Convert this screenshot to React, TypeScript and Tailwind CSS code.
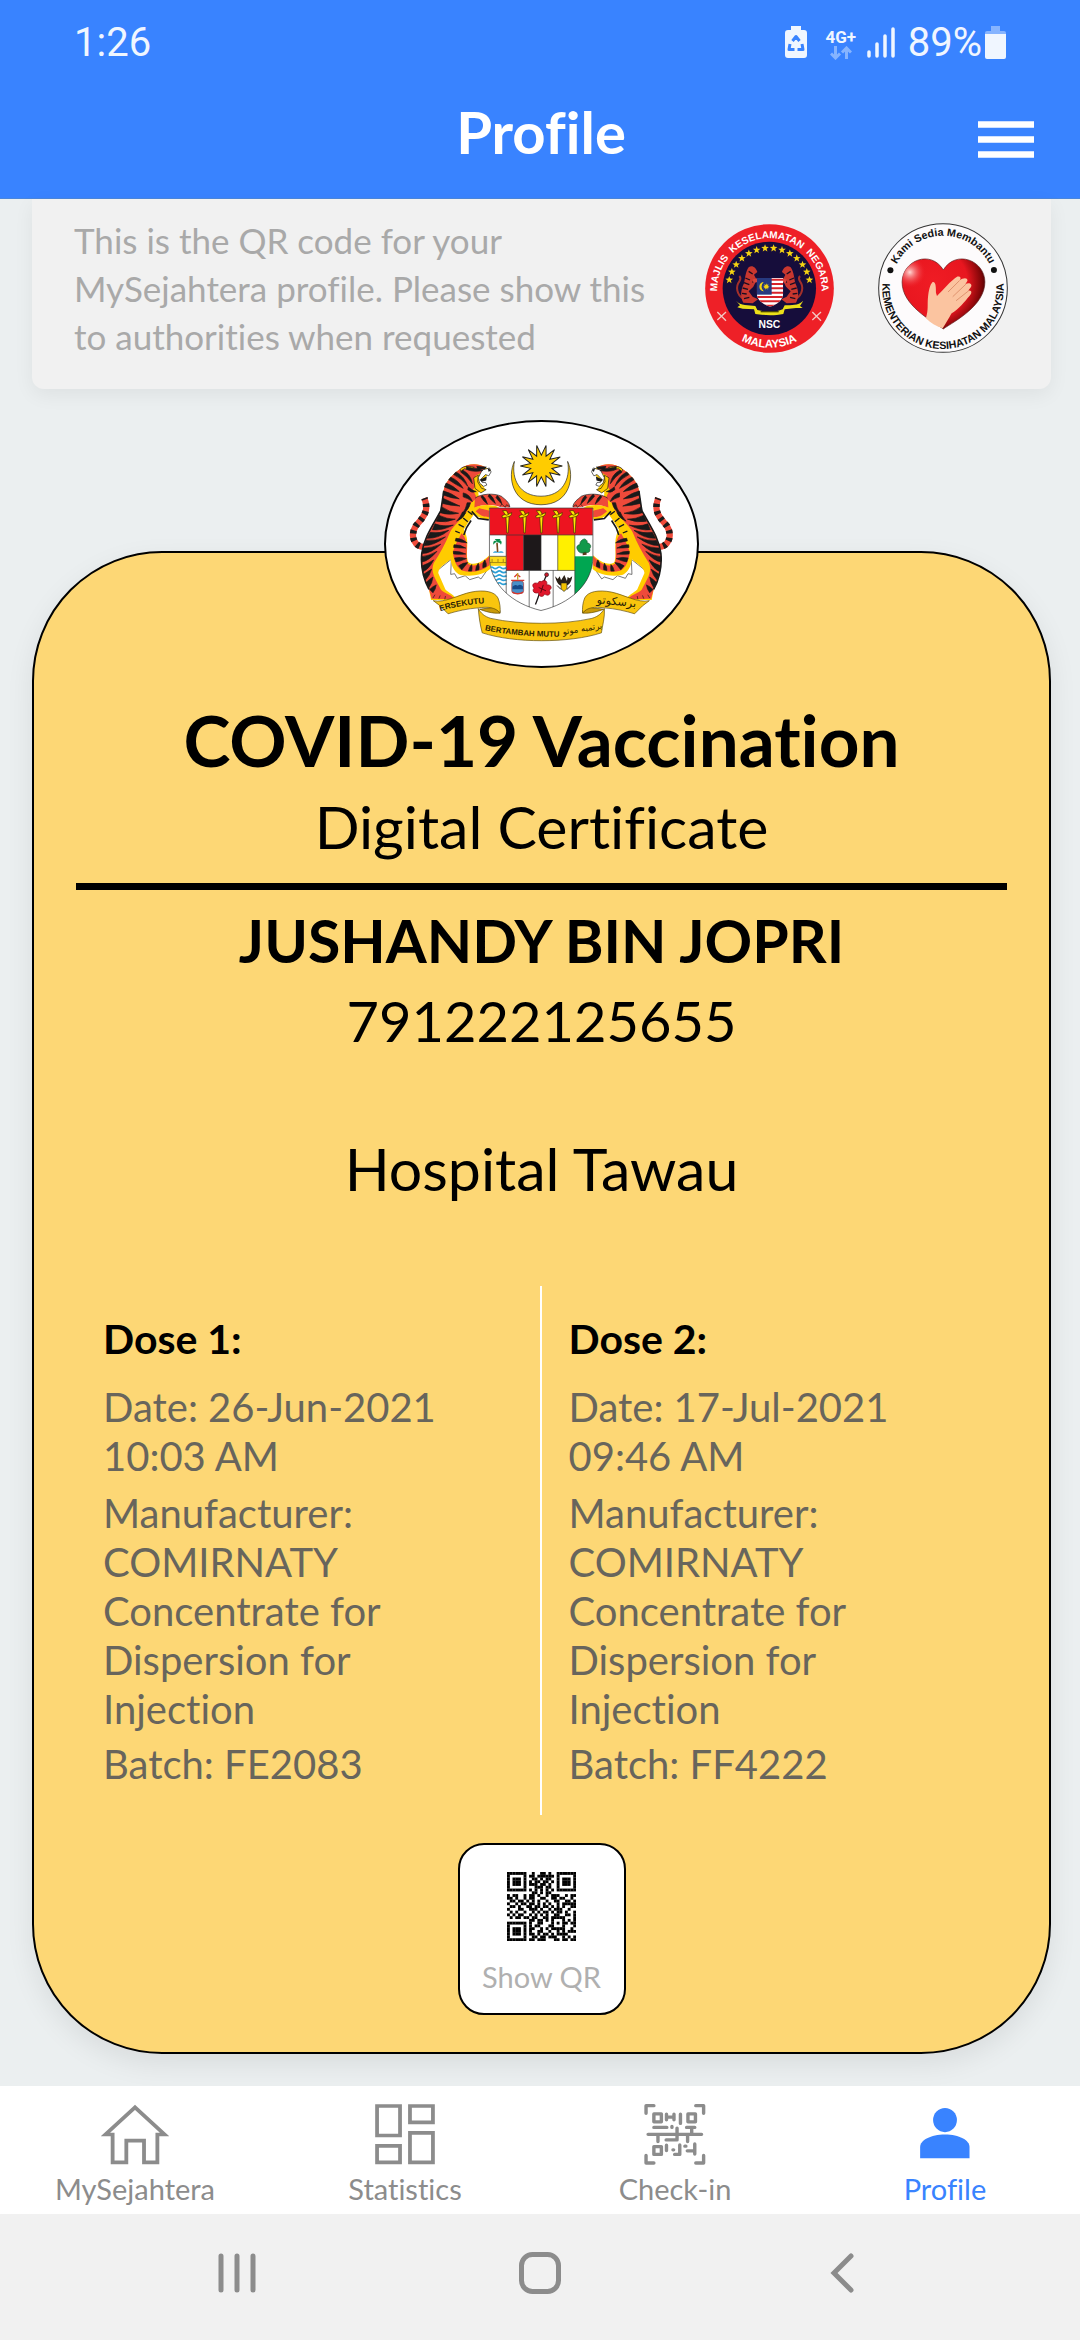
import React from "react";

const QR_ROWS = [
  "1111111001001101001111111",
  "1000001011011111101000001",
  "1011101001101011001011101",
  "1011101010110110101011101",
  "1011101011101101001011101",
  "1000001000111011001000001",
  "1111111010101010101111111",
  "0000000001101011000000000",
  "1011001011010010111001011",
  "1101001011001100110110010",
  "0110110101010010011001101",
  "1001011011010101001011111",
  "0110100110110110101010011",
  "1000110011101001011100100",
  "0101001001010110101101001",
  "1010110010101010011001101",
  "0101101101100110111110001",
  "0000000011011010100010101",
  "1111111010011000101011011",
  "1000001010110001100010001",
  "1011101011001010111110010",
  "1011101010011001001010111",
  "1011101011010110101111000",
  "1000001001101101110010101",
  "1111111011011100011011011",
];

const TIGER_STRIPES = [
  "M216 240 Q240 246 264 264 Q238 262 215 252 Z",
  "M214 262 Q240 274 266 286 Q236 284 213 278 Z",
  "M210 288 Q232 304 262 308 Q230 314 206 306 Z",
  "M202 314 Q226 326 252 326 Q222 338 194 332 Z",
  "M190 340 Q214 350 246 344 Q210 362 182 358 Z",
  "M176 366 Q204 370 232 360 Q200 386 166 384 Z",
  "M164 390 Q190 394 222 380 Q184 408 157 406 Z",
  "M155 414 Q180 414 208 402 Q176 432 151 430 Z",
  "M150 440 Q172 438 196 424 Q170 454 150 456 Z",
  "M151 468 Q168 462 186 450 Q172 478 153 486 Z",
  "M155 494 Q168 486 180 478 Q174 498 162 510 Z",
  "M164 518 Q174 508 184 502 Q182 520 172 534 Z",
  "M174 540 Q184 530 194 526 Q192 540 184 550 Z",
  "M224 216 Q246 224 264 242 Q240 238 219 228 Z",
  "M238 198 Q262 208 276 232 Q252 220 232 206 Z",
  "M254 182 Q280 196 290 226 Q272 202 247 190 Z",
  "M274 176 Q300 190 304 218 Q290 196 268 182 Z",
  "M286 166 Q306 172 326 172 L336 178 Q306 184 286 174 Z",
  "M276 246 Q296 250 304 272 Q290 262 276 258 Z",
  "M292 228 Q306 240 316 242 Q302 248 290 236 Z",
  "M298 276 Q294 298 272 312 Q286 292 288 276 Z",
  "M284 306 Q276 324 256 332 Q270 316 274 304 Z",
  "M334 254 Q344 260 350 280 Q338 272 330 258 Z",
  "M356 250 Q368 258 374 278 Q362 270 352 256 Z",
  "M380 254 Q390 262 394 280 Q384 272 376 260 Z",
  "M254 384 Q272 384 288 398 Q270 396 252 392 Z",
  "M248 404 Q266 402 284 414 Q266 414 247 412 Z",
  "M246 424 Q264 422 284 432 Q264 434 247 432 Z",
  "M250 444 Q268 440 286 446 Q268 454 254 456 Z",
  "M262 468 Q276 458 290 458 Q280 470 272 480 Z",
  "M292 484 Q294 472 302 464 Q304 476 302 484 Z",
  "M314 482 Q314 470 322 460 Q326 472 324 480 Z",
  "M336 474 Q334 460 342 450 Q348 462 346 470 Z",
];

function Tiger() {
  return (
    <g>
      <path d="M166 410 C128 416 112 378 132 346 C152 322 174 304 158 262" fill="none" stroke="#ef4a3a" strokeWidth="19" />
      <path d="M166 410 C128 416 112 378 132 346 C152 322 174 304 158 262" fill="none" stroke="#1a1a1a" strokeWidth="20" strokeDasharray="10 13" />
      <path d="M200 480 L240 448 L238 494 L250 492 L258 506 L282 498 L296 510 L322 502 L330 508 L354 474" fill="#fff" stroke="#333" strokeWidth="2" />
      <path d="M276 356 C300 390 280 430 292 458 C312 470 340 452 356 436 L358 478 C338 496 300 502 268 496 C238 484 232 440 240 400 Z" fill="#fc0" />
      <path d="M268 366 C300 394 280 432 290 462 C312 476 340 456 356 438 L356 466 C330 486 300 490 272 482 C250 470 240 430 246 396 Z" fill="#ef4a3a" />
      <path d="M268 172 C242 190 218 214 216 244 L208 300 C180 350 156 384 150 430 C146 470 156 510 172 540 L178 572 L256 572 C250 556 232 550 222 540 L200 490 C202 470 222 462 238 448 C250 400 270 370 290 338 L326 286 L322 244 L344 236 L330 214 L346 196 L360 178 L344 168 C320 154 290 156 268 172 Z" fill="#fc0" />
      <path d="M268 172 C242 190 218 214 216 244 L208 300 C180 350 156 384 150 430 C146 470 156 510 172 540 L180 568 L252 570 C236 552 216 552 208 540 C192 508 176 490 186 460 C206 430 222 400 236 366 C248 340 284 320 300 276 L318 262 L306 236 L318 214 L314 194 L340 180 L344 168 C320 154 290 156 268 172 Z" fill="#ef4a3a" />
      <path d="M320 284 C334 288 346 292 356 294 L356 326 C338 328 320 322 304 304 Z" fill="#fc0" />
      <path d="M326 292 C336 296 346 298 356 300 L356 320 C342 320 328 316 314 302 Z" fill="#ef4a3a" />
      <path d="M300 330 L286 352 L278 374 M302 302 L322 324 L354 328" fill="none" stroke="#1a1a1a" strokeWidth="5" />
      <path d="M276 322 L290 334 M262 342 L278 350 M252 362 L266 368 M290 302 L304 312" stroke="#1a1a1a" strokeWidth="4" />
      <path d="M312 262 C330 248 370 246 392 256 C404 266 416 274 418 290 L388 288 C366 280 336 282 310 290 Z" fill="#ef4a3a" />
      <path d="M312 262 C330 248 370 246 392 256 C404 266 416 274 418 288 L408 282 L404 290 L394 280 L388 288" fill="none" stroke="#1a1a1a" strokeWidth="2" />
      <path d="M310 292 C330 280 362 280 386 290 L356 296 L322 292 Z" fill="#fc0" />
      <path d="M266 176 C270 166 288 162 310 168 L294 176 L280 172 L270 180 Z" fill="#fc0" stroke="#1a1a1a" strokeWidth="2" />
      <path d="M308 200 L322 192 L320 212 L332 232 L346 236 L330 246 L312 232 Z" fill="#fc0" stroke="#1a1a1a" strokeWidth="2" />
      <path d="M334 176 L356 170 L361 182 L354 194 L344 190 L330 204 L334 214 L344 214 L348 222 L338 226 L326 216 L322 200 Z" fill="#fff" stroke="#1a1a1a" strokeWidth="2" />
      <path d="M326 206 L348 196 L346 208 L332 212 Z" fill="#1a1a1a" />
      <path d="M316 164 L348 166 L342 174 L320 174 Z M350 170 L360 176 L354 182 Z" fill="#1a1a1a" />
      {TIGER_STRIPES.map((d) => (
        <path key={d} d={d} fill="#1a1a1a" stroke="#1a1a1a" strokeWidth="2" strokeLinejoin="round" />
      ))}
      <path d="M217 240 L208 300 C180 350 156 384 150 430 C146 470 156 510 172 540" fill="none" stroke="#1a1a1a" strokeWidth="5" />
      <path d="M184 566 L190 556 M202 568 L206 558 M220 570 L222 560" stroke="#1a1a1a" strokeWidth="2" />
    </g>
  );
}

function starPoints(cx: number, cy: number, outer: number, inner: number, tips: number) {
  return Array.from({ length: tips * 2 }, (_, i) => {
    const r = i % 2 ? inner : outer;
    const a = (Math.PI * i) / tips - Math.PI / 2;
    return `${(cx + r * Math.cos(a)).toFixed(1)},${(cy + r * Math.sin(a)).toFixed(1)}`;
  }).join(" ");
}

function Crest() {
  return (
    <svg viewBox="42 30 945 743" className="h-full w-full" role="img" aria-label="Coat of arms of Malaysia">
      <defs>
        <clipPath id="shield">
          <path d="M356 292 H671 V440 C671 524 600 584 513 604 C426 584 356 524 356 440 Z" />
        </clipPath>
        <path id="motto" d="M342 664 Q450 686 590 684" />
        <path id="motto-left" d="M206 606 Q270 586 350 582" />
      </defs>
      <path d="M432 150 C410 196 424 282 513 282 C602 282 616 196 594 150 C604 204 578 256 513 256 C448 256 422 204 432 150 Z" fill="#fc0" stroke="#222" strokeWidth="2" />
      <polygon points={starPoints(514, 164, 64, 33, 14)} transform="rotate(13 514 164)" fill="#fc0" stroke="#222" strokeWidth="3" />
      <Tiger />
      <g transform="translate(1028 0) scale(-1 1)">
        <Tiger />
      </g>
      <g clipPath="url(#shield)">
        <rect x="356" y="292" width="315" height="320" fill="#fff" />
        <rect x="356" y="292" width="315" height="82" fill="#ed1420" />
        <rect x="407" y="374" width="53" height="108" fill="#ed1420" />
        <rect x="460" y="374" width="53" height="108" fill="#1d181a" />
        <rect x="564" y="374" width="52" height="108" fill="#fff000" />
        <rect x="356" y="439" width="51" height="29" fill="#ffd91a" />
        <path d="M356 458 H407 M364 458 V447 M382 458 V447 M398 458 V447" stroke="#a98a12" strokeWidth="3" />
        <path d="M356 474 q6 -5 12 0 t12 0 t12 0 t16 0 M356 486 q6 -5 12 0 t12 0 t12 0 t16 0 M356 498 q6 -5 12 0 t12 0 t12 0 t16 0 M356 510 q6 -5 12 0 t12 0 t12 0 t16 0 M356 522 q6 -5 12 0 t12 0 t12 0 t16 0" fill="none" stroke="#2c9fd6" strokeWidth="5" />
        <rect x="616" y="439" width="56" height="120" fill="#00a651" />
        <g fill="none" stroke="#333" strokeWidth="2">
          <path d="M356 374 H671 M407 374 V560 M460 374 V482 M513 374 V482 M564 374 V482 M616 374 V560 M407 482 H616 M477 482 V604 M550 482 V604 M356 439 H407" />
        </g>
        <path d="M366 428 q8 -8 16 -1 q10 -7 18 1 Z" fill="#2c9fd6" />
        <path d="M381 426 L379 398" stroke="#7a4a20" strokeWidth="5" />
        <path d="M380 396 C370 386 366 396 368 404 C374 394 378 396 380 396 C392 384 396 396 391 404 C388 396 382 396 380 396 M372 386 h18 l-8 12 Z" fill="#0a8f4a" />
        <path d="M640 428 L646 402 L650 402 L652 434 L640 436 Z" fill="#5b3a1c" />
        <path d="M645 386 c8 2 10 8 8 12 c12 2 14 12 8 18 c4 10 -6 14 -14 10 c-8 6 -20 2 -22 -6 c-6 -8 -2 -16 6 -16 c0 -10 6 -16 14 -18 Z" fill="#12994b" stroke="#145c2e" strokeWidth="2" />
        {[408, 460, 511, 562, 612].map((x) => (
          <g key={x} stroke="#3b2a00" strokeWidth="2" fill="#ffe600">
            <path d={`M${x - 2} 316 L${x + 8} 316 L${x + 5} 368 L${x + 1} 368 Z`} />
            <path d={`M${x - 14} 316 C${x - 6} 310 ${x + 6} 312 ${x + 16} 306 L${x + 14} 314 C${x + 6} 320 ${x - 4} 320 ${x - 12} 322 Z`} />
            <path d={`M${x - 12} 300 L${x} 300 L${x + 6} 312 L${x - 2} 314 Z`} />
          </g>
        ))}
        <rect x="424" y="514" width="36" height="38" rx="8" fill="#4a90c8" stroke="#a33" strokeWidth="2" />
        <path d="M426 532 q8 -10 16 -3 q8 -8 16 2 v8 h-32 Z" fill="#164a8a" />
        <path d="M422 512 h40 M432 502 l8 -8 l10 8 M426 548 q16 10 32 0" stroke="#d8362c" strokeWidth="4" fill="none" />
        <path d="M442 490 v20" stroke="#c9a227" strokeWidth="4" />
        <path d="M496 586 C508 556 514 530 530 496" stroke="#1d181a" strokeWidth="4" fill="none" />
        <path d="M514 516 c12 -8 20 0 16 10 c16 -2 18 12 8 16 c8 12 -4 20 -14 12 c-4 12 -20 8 -18 -4 c-14 4 -22 -6 -14 -14 c-10 -10 0 -20 12 -14 c0 -6 4 -8 10 -6 Z" fill="#e0162b" stroke="#8c0c18" strokeWidth="2" />
        <path d="M506 534 l22 10 M520 526 l-8 24" stroke="#5d0710" strokeWidth="3" />
        <circle cx="530" cy="495" r="6" fill="#c81c2c" stroke="#222" strokeWidth="2" />
        <path d="M556 500 C560 522 570 530 582 530 C596 530 606 520 608 500 L600 506 L594 502 L592 514 L584 496 L574 512 L570 500 L564 508 Z" fill="#2a2118" />
        <path d="M574 520 h18 v18 l-9 8 l-9 -8 Z" fill="#f2c200" stroke="#222" strokeWidth="2" />
        <path d="M562 528 l12 12 M604 528 l-12 12" stroke="#2a2118" strokeWidth="3" />
      </g>
      <path d="M356 292 H671 V440 C671 524 600 584 513 604 C426 584 356 524 356 440 Z" fill="none" stroke="#333" strokeWidth="2" />
      <g fill="#f9c50e" stroke="#5d4a06" strokeWidth="2">
        <path d="M326 600 C340 606 366 614 388 612 C392 596 372 592 358 596 Z" fill="#c99a08" />
        <path d="M704 600 C690 606 662 614 640 612 C636 596 656 592 670 596 Z" fill="#c99a08" />
        <path d="M185 574 C220 582 262 556 300 548 C340 540 372 546 382 566 C388 580 390 598 388 612 C376 594 350 592 322 596 C290 598 256 606 230 614 L206 590 Z" />
        <path d="M843 574 C808 582 766 556 728 548 C688 540 656 546 646 566 C640 580 638 598 640 612 C652 594 678 592 706 596 C738 598 772 606 798 614 L822 590 Z" />
        <path d="M322 598 C330 612 340 622 360 628 C450 648 580 648 668 628 C688 622 698 612 706 598 C708 624 700 650 697 672 C600 704 430 704 334 672 C328 650 324 624 322 598 Z" />
      </g>
      <g fill="#2b2205" fontFamily="'Liberation Sans', sans-serif" fontWeight="700">
        <text fontSize="25"><textPath href="#motto-left">ERSEKUTU</textPath></text>
        <text fontSize="24"><textPath href="#motto">BERTAMBAH MUTU</textPath></text>
      </g>
      <g fill="#2b2205" fontFamily="'DejaVu Sans', sans-serif">
        <text x="742" y="588" fontSize="34" textAnchor="middle" transform="rotate(6 742 588)">برسکوتو</text>
        <text x="640" y="668" fontSize="26" textAnchor="middle" transform="rotate(-9 640 668)">برتمبه موتو</text>
      </g>
    </svg>
  );
}

function SmallTiger() {
  return (
    <g>
      <path d="M160 262 C140 250 136 226 148 210 C152 204 154 200 148 194" fill="none" stroke="#a3302a" strokeWidth="6" />
      <path d="M176 168 C186 160 198 168 202 182 L192 190 L200 206 L190 226 L176 240 L188 256 L204 264 L188 276 L160 274 C150 258 152 236 162 216 C166 200 166 182 176 168 Z" fill="#c8372f" />
      <path d="M166 200 l14 6 M162 214 l16 6 M158 230 l16 4 M156 246 l14 2 M162 262 l16 -4 M176 180 l12 8 M188 214 l6 -10" stroke="#1b0d20" strokeWidth="4" />
      <path d="M188 204 L206 200 L204 212 L190 214 Z" fill="#d9453c" />
    </g>
  );
}

function NscLogo() {
  const stars = Array.from({ length: 14 }, (_, i) => {
    const a = ((168 - i * 12) * Math.PI) / 180;
    return [238 + 123 * Math.cos(a), 231 - 121 * Math.sin(a)];
  });
  return (
    <svg viewBox="45 38 387 387" className="size-[129px] shrink-0" role="img" aria-label="Majlis Keselamatan Negara Malaysia">
      <defs>
        <path id="nsc-top" d="M82 250 A157 157 0 1 1 395 250" />
        <path id="nsc-bottom" d="M60 231 A178 178 0 0 0 416 231" />
        <clipPath id="nsc-shield">
          <path d="M200 200 H280 V244 C280 266 260 280 240 286 C220 280 200 266 200 244 Z" />
        </clipPath>
      </defs>
      <circle cx="238.500" cy="231.500" r="193" fill="#ee2027" />
      <circle cx="238" cy="231" r="140" fill="#160d3b" />
      {stars.map(([x, y]) => (
        <polygon key={x} points={starPoints(x, y, 12, 5, 5)} fill="#f5d312" />
      ))}
      <SmallTiger />
      <g transform="translate(478 0) scale(-1 1)">
        <SmallTiger />
      </g>
      <g clipPath="url(#nsc-shield)">
        <rect x="200" y="198" width="80" height="90" fill="#fff" />
        <path d="M200 205 H280 M200 218 H280 M200 231 H280 M200 244 H280 M200 257 H280 M200 270 H280 M200 283 H280" stroke="#d8232a" strokeWidth="6" />
        <rect x="200" y="198" width="45" height="52" fill="#27397f" />
        <path d="M222 212 A14 14 0 1 0 222 240 A17 17 0 0 1 222 212 Z" fill="#f5d312" />
        <polygon points={starPoints(229, 226, 10, 5, 9)} fill="#f5d312" />
      </g>
      <path d="M138 268 C152 284 176 280 196 284 L202 296 C240 304 250 304 278 294 L284 282 C306 280 322 284 340 268 L330 284 L338 290 L318 290 L284 294 L280 308 C252 314 220 312 196 308 L192 294 L158 292 L142 288 L150 282 Z" fill="#ece019" />
      <path d="M212 301 H266" stroke="#4a4508" strokeWidth="4" />
      <g stroke="#f3c9c4" strokeWidth="4">
        <path d="M82 302 L108 328 M108 302 L82 326 M367 302 L393 328 M393 302 L367 326" />
      </g>
      <g fill="#fff" fontFamily="'Liberation Sans', sans-serif" fontWeight="700" textAnchor="middle">
        <text x="238" y="349" fontSize="31">NSC</text>
        <text fontSize="30"><textPath href="#nsc-top" startOffset="50%">MAJLIS&#160; KESELAMATAN&#160; NEGARA</textPath></text>
        <text fontSize="34"><textPath href="#nsc-bottom" startOffset="50%">MALAYSIA</textPath></text>
      </g>
    </svg>
  );
}

function HealthLogo() {
  return (
    <svg viewBox="565 38 388 388" className="size-[130px] shrink-0" role="img" aria-label="Kementerian Kesihatan Malaysia">
      <defs>
        <path id="kkm-top" d="M604 231 A155 155 0 0 1 914 231" />
        <path id="kkm-bottom" d="M586 180 A181 181 0 1 0 932 180" />
        <radialGradient id="heart" gradientUnits="userSpaceOnUse" cx="730" cy="215" r="170">
          <stop offset="0" stopColor="#f01c24" />
          <stop offset="0.600" stopColor="#e8161f" />
          <stop offset="0.850" stopColor="#7d0507" />
          <stop offset="1" stopColor="#1c0001" />
        </radialGradient>
        <radialGradient id="heart-shine" gradientUnits="userSpaceOnUse" cx="660" cy="185" r="48">
          <stop offset="0" stopColor="#ffd9d5" />
          <stop offset="1" stopColor="#f01c24" stopOpacity="0" />
        </radialGradient>
      </defs>
      <circle cx="759" cy="232" r="192" fill="#fdfbfc" stroke="#333" strokeWidth="3" />
      <circle cx="602" cy="179" r="9" fill="#111" />
      <circle cx="911" cy="178" r="9" fill="#111" />
      <path d="M760 354 C726 330 636 284 637 214 C638 150 722 116 760 178 C798 116 884 150 884 214 C884 284 796 330 760 354 Z" fill="url(#heart)" stroke="#5b1a1a" strokeWidth="2" />
      <path d="M760 354 C726 330 636 284 637 214 C638 150 722 116 760 178 Z" fill="url(#heart-shine)" />
      <path d="M708 322 C716 296 712 284 714 262 C716 240 720 222 728 214 C738 212 738 230 738 246 L741 256 C760 238 782 210 802 198 C812 196 814 204 808 210 C818 202 832 200 832 210 L826 220 C838 214 848 220 842 230 L834 240 C846 238 846 248 838 256 C824 272 806 296 784 308 C776 324 768 336 758 352 C738 346 722 336 708 322 Z" fill="#fbc4a0" />
      <path d="M808 210 L774 244 M828 220 L788 258 M836 240 L798 270" stroke="#d98a66" strokeWidth="2.500" fill="none" />
      <g fill="#111" fontFamily="'Liberation Sans', sans-serif" fontWeight="700" textAnchor="middle">
        <text fontSize="32"><textPath href="#kkm-top" startOffset="50%">Kami Sedia Membantu</textPath></text>
        <text fontSize="32"><textPath href="#kkm-bottom" startOffset="50%">KEMENTERIAN KESIHATAN MALAYSIA</textPath></text>
      </g>
    </svg>
  );
}

function QrCode() {
  return (
    <svg viewBox="0 0 25 25" className="size-[69px]" aria-hidden="true">
      {QR_ROWS.flatMap((row, y) =>
        row.split("").map((cell, x) =>
          cell === "1" ? <rect key={`${x}-${y}`} x={x} y={y} width="1.040" height="1.040" /> : null,
        ),
      )}
    </svg>
  );
}

function StatusBar() {
  return (
    <div className="flex h-[84px] items-center justify-between px-[74px] font-[Roboto,sans-serif] text-[40px] leading-[48px] text-[#f0f6ff]">
      <span className="pt-0.5">1:26</span>
      <div className="flex items-center">
        <svg viewBox="0 0 22 32" className="h-8 w-[22px]" aria-hidden="true">
          <path d="M6 0 h10 v4 h3 q3 0 3 3 v22 q0 3 -3 3 h-16 q-3 0 -3 -3 v-22 q0 -3 3 -3 h3 Z" fill="#f0f6ff" />
          <path d="M7.500 15 L11 10.500 L14.500 15 M5 18 L4 23.500 H9.500 M17 18 L18 23.500 H12.500" fill="none" stroke="#3983ff" strokeWidth="3" strokeLinejoin="round" />
        </svg>
        <div className="ml-[18px] flex w-8 flex-col items-center pt-1">
          <span className="text-[17px] leading-[18px] font-bold">4G+</span>
          <svg viewBox="0 0 22 14" className="h-3.5 w-[22px]" aria-hidden="true">
            <path d="M5.500 0 V11 M1 7.500 L5.500 12 L10 7.500 M16.500 13 V3 M12 6.500 L16.500 2 L21 6.500" fill="none" stroke="#86b4ff" strokeWidth="3" />
          </svg>
        </div>
        <svg viewBox="0 0 28 32" className="ml-[10px] h-8 w-7" aria-hidden="true">
          <path d="M2 26 V30 M10 18 V30 M18 10 V30 M26 3 V30" stroke="#f0f6ff" strokeWidth="3.500" strokeLinecap="round" />
        </svg>
        <span className="ml-[13px] pt-0.5">89%</span>
        <svg viewBox="0 0 21 33" className="ml-[3px] h-[33px] w-[21px]" aria-hidden="true">
          <path d="M6 0 h9 v5 h4 q2 0 2 2 v2 h-21 v-2 q0 -2 2 -2 h4 Z" fill="#86b4ff" />
          <path d="M0 8 h21 v23 q0 2 -2 2 h-17 q-2 0 -2 -2 Z" fill="#f0f6ff" />
        </svg>
      </div>
    </div>
  );
}

function Dose({ title, date, batch }: { title: string; date: string; batch: string }) {
  return (
    <div className="pt-7 pr-10 pb-[26px] pl-[27px] text-[40px] leading-[49px] text-[#68655c]">
      <h3 className="text-[41px] font-bold text-black">{title}</h3>
      <p className="mt-5">{`Date: ${date}`}</p>
      <p className="mt-2">Manufacturer: COMIRNATY Concentrate for Dispersion for Injection</p>
      <p className="mt-1.5">{`Batch: ${batch}`}</p>
    </div>
  );
}

function HomeIcon() {
  return (
    <svg viewBox="294 222 196 182" preserveAspectRatio="none" className="h-[61px] w-[68px]" aria-hidden="true">
      <path d="M392 232 L307 313 H327.500 V396 H367 V331 H418 V396 H456.500 V313 H477 Z" fill="none" stroke="#8c8c8c" strokeWidth="11" />
    </svg>
  );
}

function StatisticsIcon() {
  return (
    <svg viewBox="1091 222 175 182" preserveAspectRatio="none" className="h-[61px] w-[60px]" aria-hidden="true">
      <path d="M1097 228 H1164 V316 H1097 Z M1193 228 H1260 V277 H1193 Z M1097 347 H1164 V396 H1097 Z M1193 308 H1260 V396 H1193 Z" fill="none" stroke="#8c8c8c" strokeWidth="11" />
    </svg>
  );
}

function CheckInIcon() {
  return (
    <svg viewBox="307 219 182 185" preserveAspectRatio="none" className="h-[61px] w-[62px]" aria-hidden="true">
      <g fill="none" stroke="#8c8c8c" strokeWidth="10" strokeLinecap="round" strokeLinejoin="round">
        <path d="M313 247 V224 H336 M459 224 H482 V247 M313 375 V398 H336 M459 398 H482 V375" />
        <path d="M336 249 H358 V273 H336 Z M436 249 H458 V273 H436 Z M336 348 H358 V372 H336 Z" />
        <path d="M373 250 V267 M395 250 V267 M373 259 H395 M414 250 V278 M336 290 H374 M389 287 V290 M432 290 H456 M447 292 V310 M319 311 H476 M404 292 V327 M348 313 V333 M372 328 H404 M435 313 V333" />
        <path d="M373 344 V360 M392 358 H394 M412 343 V372 H397 M427 347 H430 M456 340 V371 M434 361 H456" />
      </g>
    </svg>
  );
}

function ProfileIcon() {
  return (
    <svg viewBox="1091 222 182 182" preserveAspectRatio="none" className="h-[61px] w-[62px]" aria-hidden="true">
      <ellipse cx="1182" cy="270" rx="35" ry="36" fill="#3983ff" />
      <path d="M1109 384 V350 C1109 330 1140 313 1182 313 C1224 313 1254 330 1254 350 V384 Z" fill="#3983ff" />
    </svg>
  );
}

const TABS = [
  { label: "MySejahtera", icon: <HomeIcon />, active: false },
  { label: "Statistics", icon: <StatisticsIcon />, active: false },
  { label: "Check-in", icon: <CheckInIcon />, active: false },
  { label: "Profile", icon: <ProfileIcon />, active: true },
];

export default function App() {
  return (
    <div className="flex min-h-screen flex-col bg-[#ebeff0] font-[Lato,sans-serif] text-black [font-variant-ligatures:none]">
      <header className="border-b border-[#4a86dc] bg-[#3983ff]">
        <StatusBar />
        <div className="grid h-[114px] grid-cols-[1fr_auto_1fr] items-center pr-[46px] pl-12">
          <h1 className="col-start-2 pb-[18px] text-[58px] leading-[70px] font-bold text-white">Profile</h1>
          <button type="button" aria-label="Menu" className="justify-self-end pb-1">
            <svg viewBox="0 0 56 37" className="h-[37px] w-14" aria-hidden="true">
              <path d="M0 3.500 H56 M0 18.500 H56 M0 33.500 H56" stroke="#fff" strokeWidth="6.500" />
            </svg>
          </button>
        </div>
      </header>

      <main className="flex-1 pr-[29px] pb-8 pl-8">
        <section className="flex items-center justify-between rounded-b-xl bg-[#f1f1f1] pt-[17px] pr-[43px] pb-[29px] pl-[42px] shadow-[0_6px_20px_rgba(0,0,0,0.06)]">
          <p className="w-[600px] text-[35px] leading-[48px] text-[#a9a9a9]">
            This is the QR code for your MySejahtera profile. Please show this to authorities when requested
          </p>
          <div className="flex items-center gap-11">
            <NscLogo />
            <HealthLogo />
          </div>
        </section>

        <section className="mt-[162px] flex flex-col items-center rounded-[130px] border-2 border-black bg-[#fdd775] px-[42px] pb-[37px] shadow-[0_10px_28px_rgba(0,0,0,0.08)]">
          <div className="-mt-[133px] h-[248px] w-[315px] overflow-hidden rounded-[50%] border-2 border-black bg-white">
            <Crest />
          </div>
          <h2 className="mt-8 text-[71px] leading-[80px] font-bold">COVID-19 Vaccination</h2>
          <p className="mt-[7px] text-[59px] leading-[80px]">Digital Certificate</p>
          <hr className="mt-4 h-[7px] w-full border-0 bg-black" />
          <p className="mt-[11px] text-[59px] leading-[80px] font-bold">JUSHANDY BIN JOPRI</p>
          <p className="text-[56px] leading-[80px]">791222125655</p>
          <p className="mt-[68px] text-[59px] leading-[80px]">Hospital Tawau</p>
          <div className="mt-[77px] grid w-full grid-cols-2 divide-x-2 divide-white">
            <Dose title="Dose 1:" date="26-Jun-2021 10:03 AM" batch="FE2083" />
            <Dose title="Dose 2:" date="17-Jul-2021 09:46 AM" batch="FF4222" />
          </div>
          <button
            type="button"
            className="mt-7 flex h-[172px] w-[168px] flex-col items-center rounded-[26px] border-2 border-black bg-white pt-[27px] text-[29px] leading-9 text-[#b0b0b0]"
          >
            <QrCode />
            <span className="mt-[18px]">Show QR</span>
          </button>
        </section>
      </main>

      <nav className="grid grid-cols-4 bg-white text-[29px] leading-9">
        {TABS.map((tab) => (
          <a
            key={tab.label}
            href="#"
            aria-current={tab.active ? "page" : undefined}
            className={
              tab.active
                ? "flex h-32 flex-col items-center gap-1.5 pt-[18px] text-[#3983ff]"
                : "flex h-32 flex-col items-center gap-1.5 pt-[18px] text-[#8c8c8c]"
            }
          >
            {tab.icon}
            <span>{tab.label}</span>
          </a>
        ))}
      </nav>

      <footer className="grid h-[126px] grid-cols-[1fr_auto_1fr] items-center bg-[#f1f1f1] px-[218px] pb-2">
        <button type="button" aria-label="Recent apps" className="justify-self-start">
          <svg viewBox="0 0 38 42" className="h-[42px] w-[38px]" aria-hidden="true">
            <path d="M3 4 V38 M19 4 V38 M35 4 V38" stroke="#8c8c8c" strokeWidth="5" strokeLinecap="round" />
          </svg>
        </button>
        <button type="button" aria-label="Home">
          <svg viewBox="0 0 42 42" className="size-[42px]" aria-hidden="true">
            <rect x="2.500" y="2.500" width="37" height="37" rx="11" fill="none" stroke="#8c8c8c" strokeWidth="5" />
          </svg>
        </button>
        <button type="button" aria-label="Back" className="justify-self-end pr-2">
          <svg viewBox="0 0 24 42" className="h-[42px] w-6" aria-hidden="true">
            <path d="M21 4 L4 21 L21 38" fill="none" stroke="#8c8c8c" strokeWidth="5" strokeLinecap="round" />
          </svg>
        </button>
      </footer>
    </div>
  );
}
